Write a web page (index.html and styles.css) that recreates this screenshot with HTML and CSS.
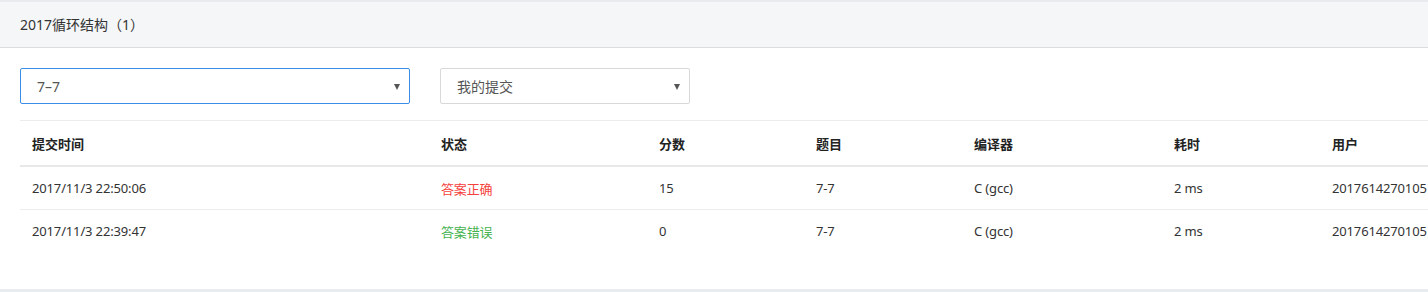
FILE: index.html
```html
<!DOCTYPE html>
<html lang="zh-CN">
<head>
<meta charset="utf-8">
<title>2017循环结构（1）</title>
<link rel="stylesheet" href="styles.css">
</head>
<body>
<div class="card">
  <div class="card-head">2017循环结构（1）</div>
  <div class="card-body">
    <div class="filters">
      <div class="select select-active"><span class="select-text">7–7</span><span class="caret"></span></div>
      <div class="select select-narrow"><span class="select-text">我的提交</span><span class="caret"></span></div>
    </div>
    <table class="subs">
      <colgroup>
        <col class="c1"><col class="c2"><col class="c3"><col class="c4"><col class="c5"><col class="c6"><col class="c7">
      </colgroup>
      <thead>
        <tr><th>提交时间</th><th>状态</th><th>分数</th><th>题目</th><th>编译器</th><th>耗时</th><th>用户</th></tr>
      </thead>
      <tbody>
        <tr><td>2017/11/3 22:50:06</td><td class="st-red">答案正确</td><td>15</td><td>7-7</td><td>C (gcc)</td><td>2 ms</td><td>2017614270105</td></tr>
        <tr><td>2017/11/3 22:39:47</td><td class="st-green">答案错误</td><td>0</td><td>7-7</td><td>C (gcc)</td><td>2 ms</td><td>2017614270105</td></tr>
      </tbody>
    </table>
  </div>
</div>
</body>
</html>
```
FILE: styles.css
```css
html, body {
  margin: 0;
  padding: 0;
  background: #fff;
}
body {
  font-family: "Noto Sans", "Noto Sans CJK SC", sans-serif;
  color: #333;
  overflow: hidden;
}
.card {
  border-top: 2px solid #e8eaee;
  border-bottom: 3px solid #e8ebef;
}
.card-head {
  height: 45px;
  line-height: 45px;
  background: #f5f6f8;
  border-bottom: 1px solid #dcdcdc;
  padding-left: 20px;
  font-size: 14px;
  color: #333;
}
.card-body {
  padding: 20px 0 37px 20px;
}
.filters {
  display: flex;
  gap: 30px;
  margin-bottom: 16px;
}
.select {
  box-sizing: border-box;
  height: 36px;
  width: 390px;
  border: 1px solid #d9d9d9;
  border-radius: 2px;
  display: flex;
  align-items: center;
  justify-content: space-between;
  padding: 0 9px 0 16px;
  font-size: 14px;
  color: #555;
}
.select-active {
  border-color: #3a8ee6;
}
.select-narrow {
  width: 250px;
}
.caret {
  width: 0;
  height: 0;
  border-left: 3px solid transparent;
  border-right: 3px solid transparent;
  border-top: 6px solid #555;
  margin-top: 1px;
}
.subs {
  width: 1408px;
  border-collapse: collapse;
  table-layout: fixed;
  font-size: 13px;
}
.c1 { width: 409px; }
.c2 { width: 218px; }
.c3 { width: 157px; }
.c4 { width: 158px; }
.c5 { width: 200px; }
.c6 { width: 158px; }
.c7 { width: 108px; }
.subs th, .subs td {
  text-align: left;
  padding: 0 0 0 12px;
  white-space: nowrap;
  overflow: visible;
}
.subs th {
  height: 44px;
  font-weight: bold;
  color: #222;
  border-top: 1px solid #ececec;
  border-bottom: 2px solid #e8e8e8;
}
.subs td {
  height: 42px;
  color: #333;
  letter-spacing: -0.15px;
}
.subs tbody tr:first-child td {
  border-bottom: 1px solid #ececec;
}
.st-red { color: #f5413c !important; }
.st-green { color: #45b24f !important; }
```
